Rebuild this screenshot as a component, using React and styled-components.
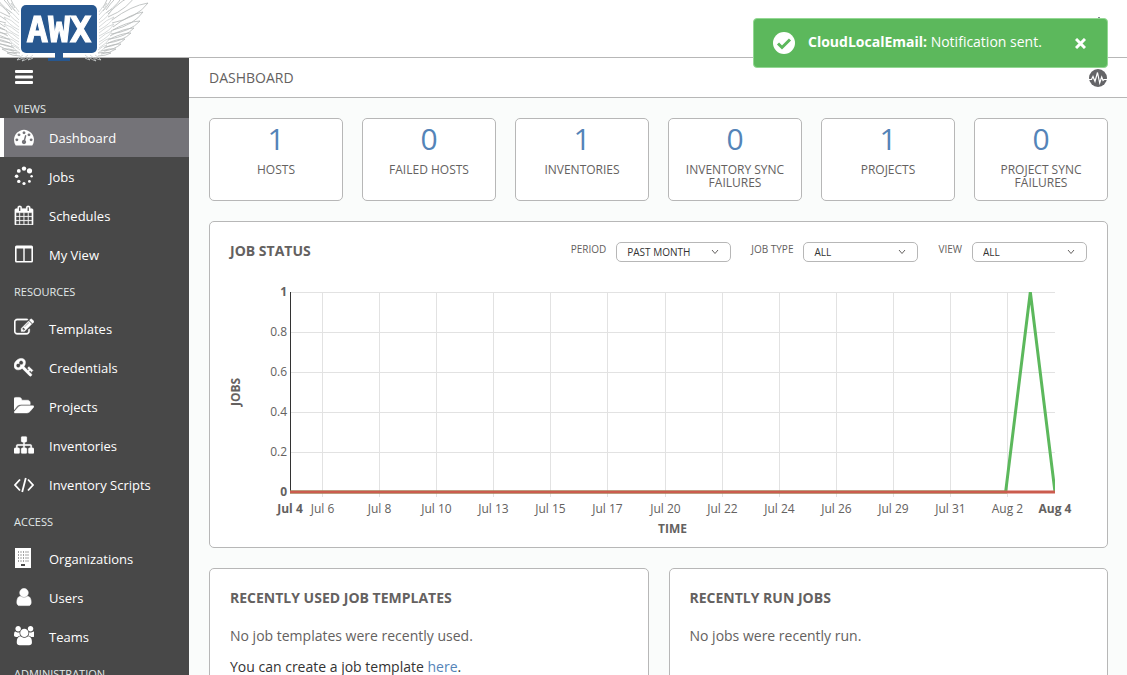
import React, { useLayoutEffect, useRef, useState } from "react";
import styled, { createGlobalStyle } from "styled-components";

const GlobalStyle = createGlobalStyle`
  *, *::before, *::after { box-sizing: border-box; }
  html, body, #root { height: 100%; }
  body {
    margin: 0;
    background: #fafcfb;
    color: #333;
    font-family: "Open Sans", "Noto Sans", sans-serif;
    font-size: 14px;
    overflow: hidden;
  }
  button { font: inherit; padding: 0; border: 0; background: none; cursor: pointer; }
  h1, h2, p, ul { margin: 0; padding: 0; }
`;

const Page = styled.div`
  display: flex;
  flex-direction: column;
  height: 100vh;
`;

const TopBar = styled.header`
  display: flex;
  justify-content: space-between;
  align-items: flex-start;
  flex: none;
  height: 58px;
  padding-right: 21px;
  background: #fff;
  border-bottom: 1px solid #b7b7b7;
`;

const LogoLink = styled.a`
  position: relative;
  z-index: 2;
  display: block;
  height: 62px;
`;

const PowerButton = styled.button`
  margin-top: 17px;
  color: #848992;
  line-height: 0;
`;

const Body = styled.div`
  display: flex;
  flex: 1;
  min-height: 0;
`;

const Sidebar = styled.nav`
  flex: none;
  width: 189px;
  overflow: hidden auto;
  scrollbar-width: none;
  background: #484848;
  color: #fff;
`;

const MenuButton = styled.button`
  display: flex;
  align-items: center;
  height: 38px;
  margin-bottom: 4px;
  padding-left: 15px;
`;

const NavHeading = styled.h2`
  padding: ${(p) => (p.$first ? 0 : "9px")} 0 ${(p) => (p.$first ? 0 : "8px")} 14px;
  color: #e2e8ea;
  font-size: 11px;
  font-weight: 400;
  line-height: 18px;
`;

const NavList = styled.ul`
  list-style: none;
`;

const NavLink = styled.a`
  display: flex;
  align-items: center;
  gap: 15px;
  height: 39px;
  padding-left: 10px;
  border-left: 4px solid ${(p) => (p.$active ? "#fff" : "transparent")};
  background: ${(p) => (p.$active ? "#747378" : "transparent")};
  background-clip: padding-box;
  color: #fff;
  font-size: 13px;
  line-height: 18px;
  text-decoration: none;
`;

const IconSlot = styled.span`
  display: flex;
  width: 20px;
  height: 22px;
  svg { display: block; width: 20px; height: 20px; fill: currentColor; }
`;

const Main = styled.main`
  flex: 1;
  min-width: 0;
  overflow: hidden auto;
  scrollbar-width: none;
`;

const Breadcrumb = styled.div`
  display: flex;
  align-items: center;
  justify-content: space-between;
  height: 40px;
  padding: 0 20px;
  background: #fff;
  border-bottom: 1px solid #b7b7b7;
`;

const PageTitle = styled.h1`
  color: #646160;
  font-size: 14px;
  font-weight: 400;
`;

const StreamButton = styled.button`
  display: block;
  height: 18px;
`;

const Content = styled.div`
  display: flex;
  flex-direction: column;
  gap: 20px;
  padding: 20px 19px 20px 20px;
`;

const Counts = styled.div`
  display: grid;
  grid-template-columns: repeat(6, 1fr);
  gap: 19px;
`;

const CountCard = styled.a`
  display: flex;
  flex-direction: column;
  align-items: center;
  height: 83px;
  background: #fff;
  border: 1px solid #b7b7b7;
  border-radius: 5px;
  color: #646160;
  text-align: center;
  text-decoration: none;
`;

const CountNumber = styled.span`
  height: 44px;
  color: #5484b8;
  font-size: 30px;
  line-height: 40px;
`;

const CountLabel = styled.span`
  max-width: 110px;
  font-size: 12px;
  line-height: 13px;
`;

const Panel = styled.section`
  background: #fff;
  border: 1px solid #b7b7b7;
  border-radius: 5px;
  padding: 0 20px;
`;

const PanelHeader = styled.div`
  display: flex;
  align-items: center;
  justify-content: space-between;
  height: 57px;
`;

const PanelTitle = styled.h2`
  color: #646160;
  font-size: 14px;
  font-weight: 700;
  line-height: 20px;
`;

const Filters = styled.div`
  display: flex;
  gap: 20px;
`;

const Filter = styled.div`
  display: flex;
  gap: 10px;
`;

const FilterLabel = styled.label`
  color: #646160;
  font-size: 10px;
  line-height: 18px;
`;

const SelectBox = styled.div`
  position: relative;
  margin-top: 2px;
  svg { position: absolute; right: 12px; top: 7px; pointer-events: none; }
`;

const Select = styled.select`
  display: block;
  width: 115px;
  height: 20px;
  padding: 0 24px 0 10px;
  appearance: none;
  background: #fff;
  border: 1px solid #b7b7b7;
  border-radius: 5px;
  color: #333;
  font-family: inherit;
  font-size: 10px;
`;

const ChartFrame = styled.div`
  height: 268px;
  svg { display: block; }
  text { fill: #646160; font-size: 12px; }
`;

const Lists = styled.div`
  display: grid;
  grid-template-columns: 1fr 1fr;
  gap: 20px;
`;

const ListPanel = styled(Panel)`
  min-height: 200px;
`;

const ListText = styled.p`
  padding-bottom: 11px;
  color: ${(p) => (p.$dark ? "#333" : "#646160")};
  line-height: 20px;
`;

const InlineLink = styled.a`
  color: #5484b8;
  text-decoration: none;
`;

const Toast = styled.div`
  position: fixed;
  z-index: 5;
  top: 18px;
  right: 19px;
  display: flex;
  align-items: center;
  width: 355px;
  height: 50px;
  padding: 0 21px 0 19px;
  background: #5cb85c;
  border: 1px solid #93d893;
  border-radius: 4px;
  color: #fff;
`;

const ToastText = styled.p`
  flex: 1;
  padding: 0 0 3px 13px;
  line-height: 20px;
`;

const paths = {
  dashboard:
    "M384 1152q0-53-37.5-90.5t-90.5-37.5-90.5 37.5-37.5 90.5 37.5 90.5 90.5 37.5 90.5-37.5 37.5-90.5zm192-448q0-53-37.5-90.5t-90.5-37.5-90.5 37.5-37.5 90.5 37.5 90.5 90.5 37.5 90.5-37.5 37.5-90.5zm428 481l101-382q6-26-7.5-48.5t-38.5-29.5-48 6.5-30 39.5l-101 382q-60 5-107 43.5t-63 98.5q-20 77 20 146t117 89 146-20 89-117q16-60-6-117t-72-91zm660-33q0-53-37.5-90.5t-90.5-37.5-90.5 37.5-37.5 90.5 37.5 90.5 90.5 37.5 90.5-37.5 37.5-90.5zm-640-640q0-53-37.5-90.5t-90.5-37.5-90.5 37.5-37.5 90.5 37.5 90.5 90.5 37.5 90.5-37.5 37.5-90.5zm448 192q0-53-37.5-90.5t-90.5-37.5-90.5 37.5-37.5 90.5 37.5 90.5 90.5 37.5 90.5-37.5 37.5-90.5zm320 448q0 261-141 483-19 29-54 29h-1402q-35 0-54-29-141-221-141-483 0-182 71-348t191-286 286-191 348-71 348 71 286 191 191 286 71 348z",
  calendar:
    "M192 1664h288v-288h-288v288zm352 0h320v-288h-320v288zm-352-352h288v-320h-288v320zm352 0h320v-320h-320v320zm-352-384h288v-288h-288v288zm736 736h320v-288h-320v288zm-384-736h320v-288h-320v288zm768 736h288v-288h-288v288zm-384-352h320v-320h-320v320zm-352-864v-288q0-13-9.5-22.5t-22.5-9.5h-64q-13 0-22.5 9.5t-9.5 22.5v288q0 13 9.5 22.5t22.5 9.5h64q13 0 22.5-9.5t9.5-22.5zm736 864h288v-320h-288v320zm-384-384h320v-288h-320v288zm384 0h288v-288h-288v288zm32-480v-288q0-13-9.5-22.5t-22.5-9.5h-64q-13 0-22.5 9.5t-9.5 22.5v288q0 13 9.5 22.5t22.5 9.5h64q13 0 22.5-9.5t9.5-22.5zm384-64v1280q0 52-38 90t-90 38h-1408q-52 0-90-38t-38-90v-1280q0-52 38-90t90-38h128v-96q0-66 47-113t113-47h64q66 0 113 47t47 113v96h384v-96q0-66 47-113t113-47h64q66 0 113 47t47 113v96h128q52 0 90 38t38 90z",
  edit:
    "M888 1184l116-116-152-152-116 116v56h96v96h56zm440-720q-16-16-33 1l-350 350q-17 17-1 33t33-1l350-350q17-17 1-33zm80 594v190q0 119-84.5 203.5t-203.5 84.5h-832q-119 0-203.5-84.5t-84.5-203.5v-832q0-119 84.5-203.5t203.5-84.5h832q63 0 117 25 15 7 18 23 3 17-9 29l-49 49q-14 14-32 8-23-6-45-6h-832q-66 0-113 47t-47 113v832q0 66 47 113t113 47h832q66 0 113-47t47-113v-126q0-13 9-22l64-64q15-15 35-7t20 29zm-96-738l288 288-672 672h-288v-288zm444 132l-92 92-288-288 92-92q28-28 68-28t68 28l152 152q28 28 28 68t-28 68z",
  key:
    "M832 512q0-80-56-136t-136-56-136 56-56 136q0 42 19 83-41-19-83-19-80 0-136 56t-56 136 56 136 136 56 136-56 56-136q0-42-19-83 41 19 83 19 80 0 136-56t56-136zm851 704q0 17-49 66t-66 49q-9 0-28.5-16t-36.5-33-38.5-40-24.5-26l-96 96 220 220q28 28 28 68 0 42-39 81t-81 39q-40 0-68-28l-671-671q-176 131-365 131-163 0-265.5-102.5t-102.5-265.5q0-160 95-313t248-248 313-95q163 0 265.5 102.5t102.5 265.5q0 189-131 365l355 355 96-96q-3-3-26-24.5t-40-38.5-33-36.5-16-28.5q0-17 49-66t66-49q13 0 23 10 6 6 46 44.5t82 79.5 86.5 86 73 78 28.5 41z",
  folder:
    "M1815 952q0 31-31 66l-336 396q-43 51-120.5 86.5t-143.5 35.5h-1088q-34 0-60.5-13t-26.5-43q0-31 31-66l336-396q43-51 120.5-86.5t143.5-35.5h1088q34 0 60.5 13t26.5 43zm-343-344v160h-832q-94 0-197 47.5t-164 119.5l-337 396-5 6q0-4-.5-12.5t-.5-12.5v-960q0-92 66-158t158-66h320q92 0 158 66t66 158v32h544q92 0 158 66t66 158z",
  sitemap:
    "M1792 1248v320q0 40-28 68t-68 28h-320q-40 0-68-28t-28-68v-320q0-40 28-68t68-28h96v-192h-512v192h96q40 0 68 28t28 68v320q0 40-28 68t-68 28h-320q-40 0-68-28t-28-68v-320q0-40 28-68t68-28h96v-192h-512v192h96q40 0 68 28t28 68v320q0 40-28 68t-68 28h-320q-40 0-68-28t-28-68v-320q0-40 28-68t68-28h96v-192q0-52 38-90t90-38h512v-192h-96q-40 0-68-28t-28-68v-320q0-40 28-68t68-28h320q40 0 68 28t28 68v320q0 40-28 68t-68 28h-96v192h512q52 0 90 38t38 90v192h96q40 0 68 28t28 68z",
  user:
    "M1536 1399q0 109-62.5 187t-150.5 78h-854q-88 0-150.5-78t-62.5-187q0-85 8.5-160.5t31.5-152 58.5-131 94-89 134.5-34.5q131 128 313 128t313-128q76 0 134.5 34.5t94 89 58.5 131 31.5 152 8.5 160.5zm-256-887q0 159-112.5 271.5t-271.5 112.5-271.5-112.5-112.5-271.5 112.5-271.5 271.5-112.5 271.5 112.5 112.5 271.5z",
  users:
    "M593 896q-162 5-265 128h-134q-82 0-138-40.5t-56-118.5q0-353 124-353 6 0 43.5 21t97.5 42.5 119 21.5q67 0 133-23-5 37-5 66 0 139 81 256zm1071 637q0 120-73 189.5t-194 69.5h-874q-121 0-194-69.5t-73-189.5q0-53 3.5-103.5t14-109 26.5-108.5 43-97.5 62-81 85.5-53.5 111.5-20q10 0 43 21.5t73 48 107 48 135 21.5 135-21.5 107-48 73-48 43-21.5q61 0 111.5 20t85.5 53.5 62 81 43 97.5 26.5 108.5 14 109 3.5 103.5zm-1024-1277q0 106-75 181t-181 75-181-75-75-181 75-181 181-75 181 75 75 181zm704 384q0 159-112.5 271.5t-271.5 112.5-271.5-112.5-112.5-271.5 112.5-271.5 271.5-112.5 271.5 112.5 112.5 271.5zm576 225q0 78-56 118.5t-138 40.5h-134q-103-123-265-128 81-117 81-256 0-29-5-66 66 23 133 23 59 0 119-21.5t97.5-42.5 43.5-21q124 0 124 353zm-128-609q0 106-75 181t-181 75-181-75-75-181 75-181 181-75 181 75 75 181z",
};

const Glyph = ({ name, box = "0 0 1792 1792", weight = 50 }) => (
  <svg viewBox={box} aria-hidden="true">
    <path fillRule="evenodd" d={paths[name]} stroke="currentColor" strokeWidth={weight} />
  </svg>
);

const JobsIcon = () => (
  <svg viewBox="0 0 20 20" aria-hidden="true">
    <circle cx="10" cy="2.6" r="2.2" />
    <circle cx="15.5" cy="4.8" r="2.6" />
    <circle cx="17.6" cy="10.2" r="1.2" />
    <circle cx="15.4" cy="15.4" r="1.4" />
    <circle cx="10" cy="17.5" r="1.6" />
    <circle cx="4.8" cy="15.4" r="1.7" />
    <circle cx="2.6" cy="10.2" r="1.8" />
    <circle cx="4.8" cy="4.9" r="1.9" />
  </svg>
);

const ColumnsIcon = () => (
  <svg viewBox="0 0 20 20" aria-hidden="true">
    <path
      fillRule="evenodd"
      d="M2.500 1.500h15a1.500 1.500 0 0 1 1.500 1.500v14a1.500 1.500 0 0 1-1.500 1.500h-15a1.500 1.500 0 0 1-1.500-1.500V3a1.500 1.500 0 0 1 1.500-1.500zM2.600 4.500v12.500h6.700v-12.500zM10.700 4.500v12.500h6.700v-12.500z"
    />
  </svg>
);

const CodeIcon = () => (
  <svg viewBox="0 0 20 20" aria-hidden="true">
    <path
      d="M6 5.500L1 11l5 5.500M14 5.500l5 5.500-5 5.500M11.800 4L8.200 18"
      style={{ fill: "none" }}
      stroke="currentColor"
      strokeWidth="1.800"
    />
  </svg>
);

const BuildingIcon = () => (
  <svg viewBox="0 0 20 20" aria-hidden="true">
    <path d="M1 0h16v20h-16z" />
    <g fill="#484848">
      {[3.5, 6.5, 9.5, 12.5].map((y) =>
        [4, 6.5, 9, 11.5, 13.5].map((x) => <rect key={`${x}-${y}`} x={x} y={y} width="1" height="1" />)
      )}
      <rect x="7" y="16" width="4" height="2" />
    </g>
  </svg>
);

const groups = [
  {
    title: "VIEWS",
    items: [
      ["Dashboard", <Glyph name="dashboard" weight={0} />],
      ["Jobs", <JobsIcon />],
      ["Schedules", <Glyph name="calendar" box="0 -64 1800 1800" weight={20} />],
      ["My View", <ColumnsIcon />],
    ],
  },
  {
    title: "RESOURCES",
    items: [
      ["Templates", <Glyph name="edit" box="0 60 1792 1792" weight={30} />],
      ["Credentials", <Glyph name="key" />],
      ["Projects", <Glyph name="folder" box="0 0 1820 1820" />],
      ["Inventories", <Glyph name="sitemap" weight={20} />],
      ["Inventory Scripts", <CodeIcon />],
    ],
  },
  {
    title: "ACCESS",
    items: [
      ["Organizations", <BuildingIcon />],
      ["Users", <Glyph name="user" />],
      ["Teams", <Glyph name="users" box="0 0 1856 1856" weight={0} />],
    ],
  },
  { title: "ADMINISTRATION", items: [] },
];

const counts = [
  ["1", "HOSTS"],
  ["0", "FAILED HOSTS"],
  ["1", "INVENTORIES"],
  ["0", "INVENTORY SYNC FAILURES"],
  ["1", "PROJECTS"],
  ["0", "PROJECT SYNC FAILURES"],
];

const filters = [
  ["period", "PERIOD", ["PAST MONTH", "PAST TWO WEEKS", "PAST WEEK", "PAST 24 HOURS"]],
  ["type", "JOB TYPE", ["ALL", "INVENTORY SYNC", "SCM UPDATE", "PLAYBOOK RUN"]],
  ["view", "VIEW", ["ALL", "SUCCESSFUL", "FAILED"]],
];

// Each feather runs from a root point to a tip point: [rootX, rootY, tipX, tipY].
const feathers = [
  [112, 20, 148, 3],
  [113, 27, 143, 12],
  [111, 31, 140, 21],
  [110, 36, 134, 28],
  [108, 40, 131, 33],
  [106, 44, 125, 39],
  [104, 48, 121, 44],
  [101, 51, 116, 49],
  [98, 53, 111, 53],
  [108, 14, 136, -6],
  [106, 10, 124, -8],
  [103, 8, 113, -8],
];

const down = [
  [99, 12, 107, 3],
  [99, 20, 112, 9],
  [99, 27, 114, 17],
  [99, 33, 114, 24],
  [99, 39, 112, 31],
  [99, 45, 110, 38],
  [98, 50, 107, 45],
  [95, 55, 101, 60],
  [90, 55, 96, 61],
  [85, 55, 90, 60],
];

const feather = ([x1, y1, x2, y2]) => {
  const dx = x2 - x1;
  const dy = y2 - y1;
  const mx = x1 + dx * 0.6;
  const my = y1 + dy * 0.6;
  const ux = mx + dy * 0.12;
  const uy = my - dx * 0.12;
  const lx = mx - dy * 0.22;
  const ly = my + dx * 0.22;
  return `M${x1} ${y1}Q${ux} ${uy} ${x2} ${y2}Q${lx} ${ly} ${x1} ${y1 + 3}`;
};

const Wing = () => (
  <g fill="none">
    <g stroke="#b4b8b8" strokeWidth="0.800">
      {feathers.map((f) => <path key={f.join()} d={feather(f)} />)}
    </g>
    <g stroke="#cdd0d0" strokeWidth="0.800">
      {down.map((f) => <path key={f.join()} d={feather(f)} />)}
    </g>
  </g>
);

const Logo = () => (
  <svg width="150" height="62" viewBox="0 0 150 62" role="img" aria-label="AWX">
    <Wing />
    <g transform="translate(118 0) scale(-1 1)"><Wing /></g>
    <rect x="21" y="5" width="76" height="48" rx="5" fill="#27578f" />
    <path d="M55 52h8v6h7v3H48v-3h7z" fill="#27578f" />
    <text
      x="59"
      y="42"
      textAnchor="middle"
      fontFamily="'DejaVu Sans Mono', monospace"
      fontWeight="700"
      fontSize="36"
      fill="#fff"
      stroke="#fff"
      strokeWidth="1"
    >
      AWX
    </text>
  </svg>
);

const dates = ["Jul 6", "Jul 8", "Jul 10", "Jul 13", "Jul 15", "Jul 17", "Jul 20", "Jul 22", "Jul 24", "Jul 26", "Jul 29", "Jul 31", "Aug 2"];

function JobChart() {
  const frame = useRef(null);
  const [width, setWidth] = useState(857);
  useLayoutEffect(() => {
    const measure = () => setWidth(frame.current.clientWidth);
    measure();
    window.addEventListener("resize", measure);
    return () => window.removeEventListener("resize", measure);
  }, []);

  const left = 60;
  const right = width - 32;
  const top = 13;
  const bottom = 213;
  const span = right - left;
  const day = span / 31;
  const tick = (i) => Math.round(left + span * (0.0415 + i * 0.0747)) + 0.5;

  return (
    <ChartFrame ref={frame}>
      <svg width={width} height="268" role="img" aria-label="Job status over time">
        <g stroke="#e2e2e2">
          {[0, 1, 2, 3, 4].map((i) => (
            <line key={i} x1={left} x2={right} y1={top + i * 40 + 0.5} y2={top + i * 40 + 0.5} />
          ))}
          {dates.map((d, i) => (
            <line key={d} x1={tick(i)} x2={tick(i)} y1={top} y2={bottom + 5} />
          ))}
        </g>
        <line x1={left + 0.5} x2={left + 0.5} y1={top} y2={bottom} stroke="#333" />
        <svg x={left} y={top} width={span} height="202">
          <polyline
            points={`0,200 ${span - 2 * day},200 ${span - day},0 ${span},200`}
            fill="none"
            stroke="#5cb85c"
            strokeWidth="3"
          />
          <line x1="0" x2={span} y1="200" y2="200" stroke="#cb5c4e" strokeWidth="3" />
        </svg>
        {["1", "0.8", "0.6", "0.4", "0.2", "0"].map((v, i) => (
          <text key={v} x={left - 3} y={top + 4 + i * 40} textAnchor="end" fontWeight={v.length === 1 ? 700 : 400}>
            {v}
          </text>
        ))}
        <g textAnchor="middle">
          <text x={left} y="234" fontWeight="700">Jul 4</text>
          {dates.map((d, i) => (
            <text key={d} x={tick(i)} y="234">{d}</text>
          ))}
          <text x={right} y="234" fontWeight="700">Aug 4</text>
          <text x={(left + right) / 2} y="254" fontWeight="700">TIME</text>
          <text transform="translate(10 113) rotate(-90)" fontWeight="700">JOBS</text>
        </g>
      </svg>
    </ChartFrame>
  );
}

export default function App() {
  return (
    <Page>
      <GlobalStyle />
      <TopBar>
        <LogoLink href="#home"><Logo /></LogoLink>
        <PowerButton aria-label="Log out">
          <svg width="14" height="14" viewBox="0 0 14 14" fill="none" stroke="currentColor" strokeWidth="2">
            <path d="M7 0v7M4 3a5 5 0 1 0 6 0" />
          </svg>
        </PowerButton>
      </TopBar>
      <Body>
        <Sidebar>
          <MenuButton aria-label="Toggle menu">
            <svg width="18" height="14" viewBox="0 0 18 14" fill="#fff">
              <rect width="18" height="3" rx="1" />
              <rect y="5.500" width="18" height="3" rx="1" />
              <rect y="11" width="18" height="3" rx="1" />
            </svg>
          </MenuButton>
          {groups.map((group, g) => (
            <div key={group.title}>
              <NavHeading $first={g === 0}>{group.title}</NavHeading>
              <NavList>
                {group.items.map(([label, icon]) => (
                  <li key={label}>
                    <NavLink href={`#${label}`} $active={label === "Dashboard"}>
                      <IconSlot>{icon}</IconSlot>
                      {label}
                    </NavLink>
                  </li>
                ))}
              </NavList>
            </div>
          ))}
        </Sidebar>
        <Main>
          <Breadcrumb>
            <PageTitle>DASHBOARD</PageTitle>
            <StreamButton aria-label="Activity stream">
              <svg width="18" height="18" viewBox="0 0 18 18">
                <circle cx="9" cy="9" r="9" fill="#646467" />
                <path d="M0 10.500h2.500l1.500-3 2 5 2.500-9 2.200 10.500 2-6 1.300 3.500 1-1h3" fill="none" stroke="#fff" strokeWidth="1.200" />
              </svg>
            </StreamButton>
          </Breadcrumb>
          <Content>
            <Counts>
              {counts.map(([n, label]) => (
                <CountCard key={label} href={`#${label}`}>
                  <CountNumber>{n}</CountNumber>
                  <CountLabel>{label}</CountLabel>
                </CountCard>
              ))}
            </Counts>
            <Panel>
              <PanelHeader>
                <PanelTitle>JOB STATUS</PanelTitle>
                <Filters>
                  {filters.map(([id, label, options]) => (
                    <Filter key={id}>
                      <FilterLabel htmlFor={id}>{label}</FilterLabel>
                      <SelectBox>
                        <Select id={id}>
                          {options.map((o) => (
                            <option key={o}>{o}</option>
                          ))}
                        </Select>
                        <svg width="8" height="6" viewBox="0 0 8 6" fill="none" stroke="#646160">
                          <path d="M1 1l3 3.500L7 1" />
                        </svg>
                      </SelectBox>
                    </Filter>
                  ))}
                </Filters>
              </PanelHeader>
              <JobChart />
            </Panel>
            <Lists>
              <ListPanel>
                <PanelHeader><PanelTitle>RECENTLY USED JOB TEMPLATES</PanelTitle></PanelHeader>
                <ListText>No job templates were recently used.</ListText>
                <ListText $dark>
                  You can create a job template <InlineLink href="#new">here</InlineLink>.
                </ListText>
              </ListPanel>
              <ListPanel>
                <PanelHeader><PanelTitle>RECENTLY RUN JOBS</PanelTitle></PanelHeader>
                <ListText>No jobs were recently run.</ListText>
              </ListPanel>
            </Lists>
          </Content>
        </Main>
      </Body>
      <Toast role="status">
        <svg width="22" height="22" viewBox="0 0 22 22" aria-hidden="true">
          <circle cx="11" cy="11" r="11" fill="#fff" />
          <path d="M5 11.500l4 4 8-8" fill="none" stroke="#5cb85c" strokeWidth="3" />
        </svg>
        <ToastText><b>CloudLocalEmail:</b> Notification sent.</ToastText>
        <button aria-label="Close">
          <svg width="11" height="11" viewBox="0 0 11 11" fill="none" stroke="#fff" strokeWidth="3">
            <path d="M1 1l9 9M10 1l-9 9" />
          </svg>
        </button>
      </Toast>
    </Page>
  );
}
